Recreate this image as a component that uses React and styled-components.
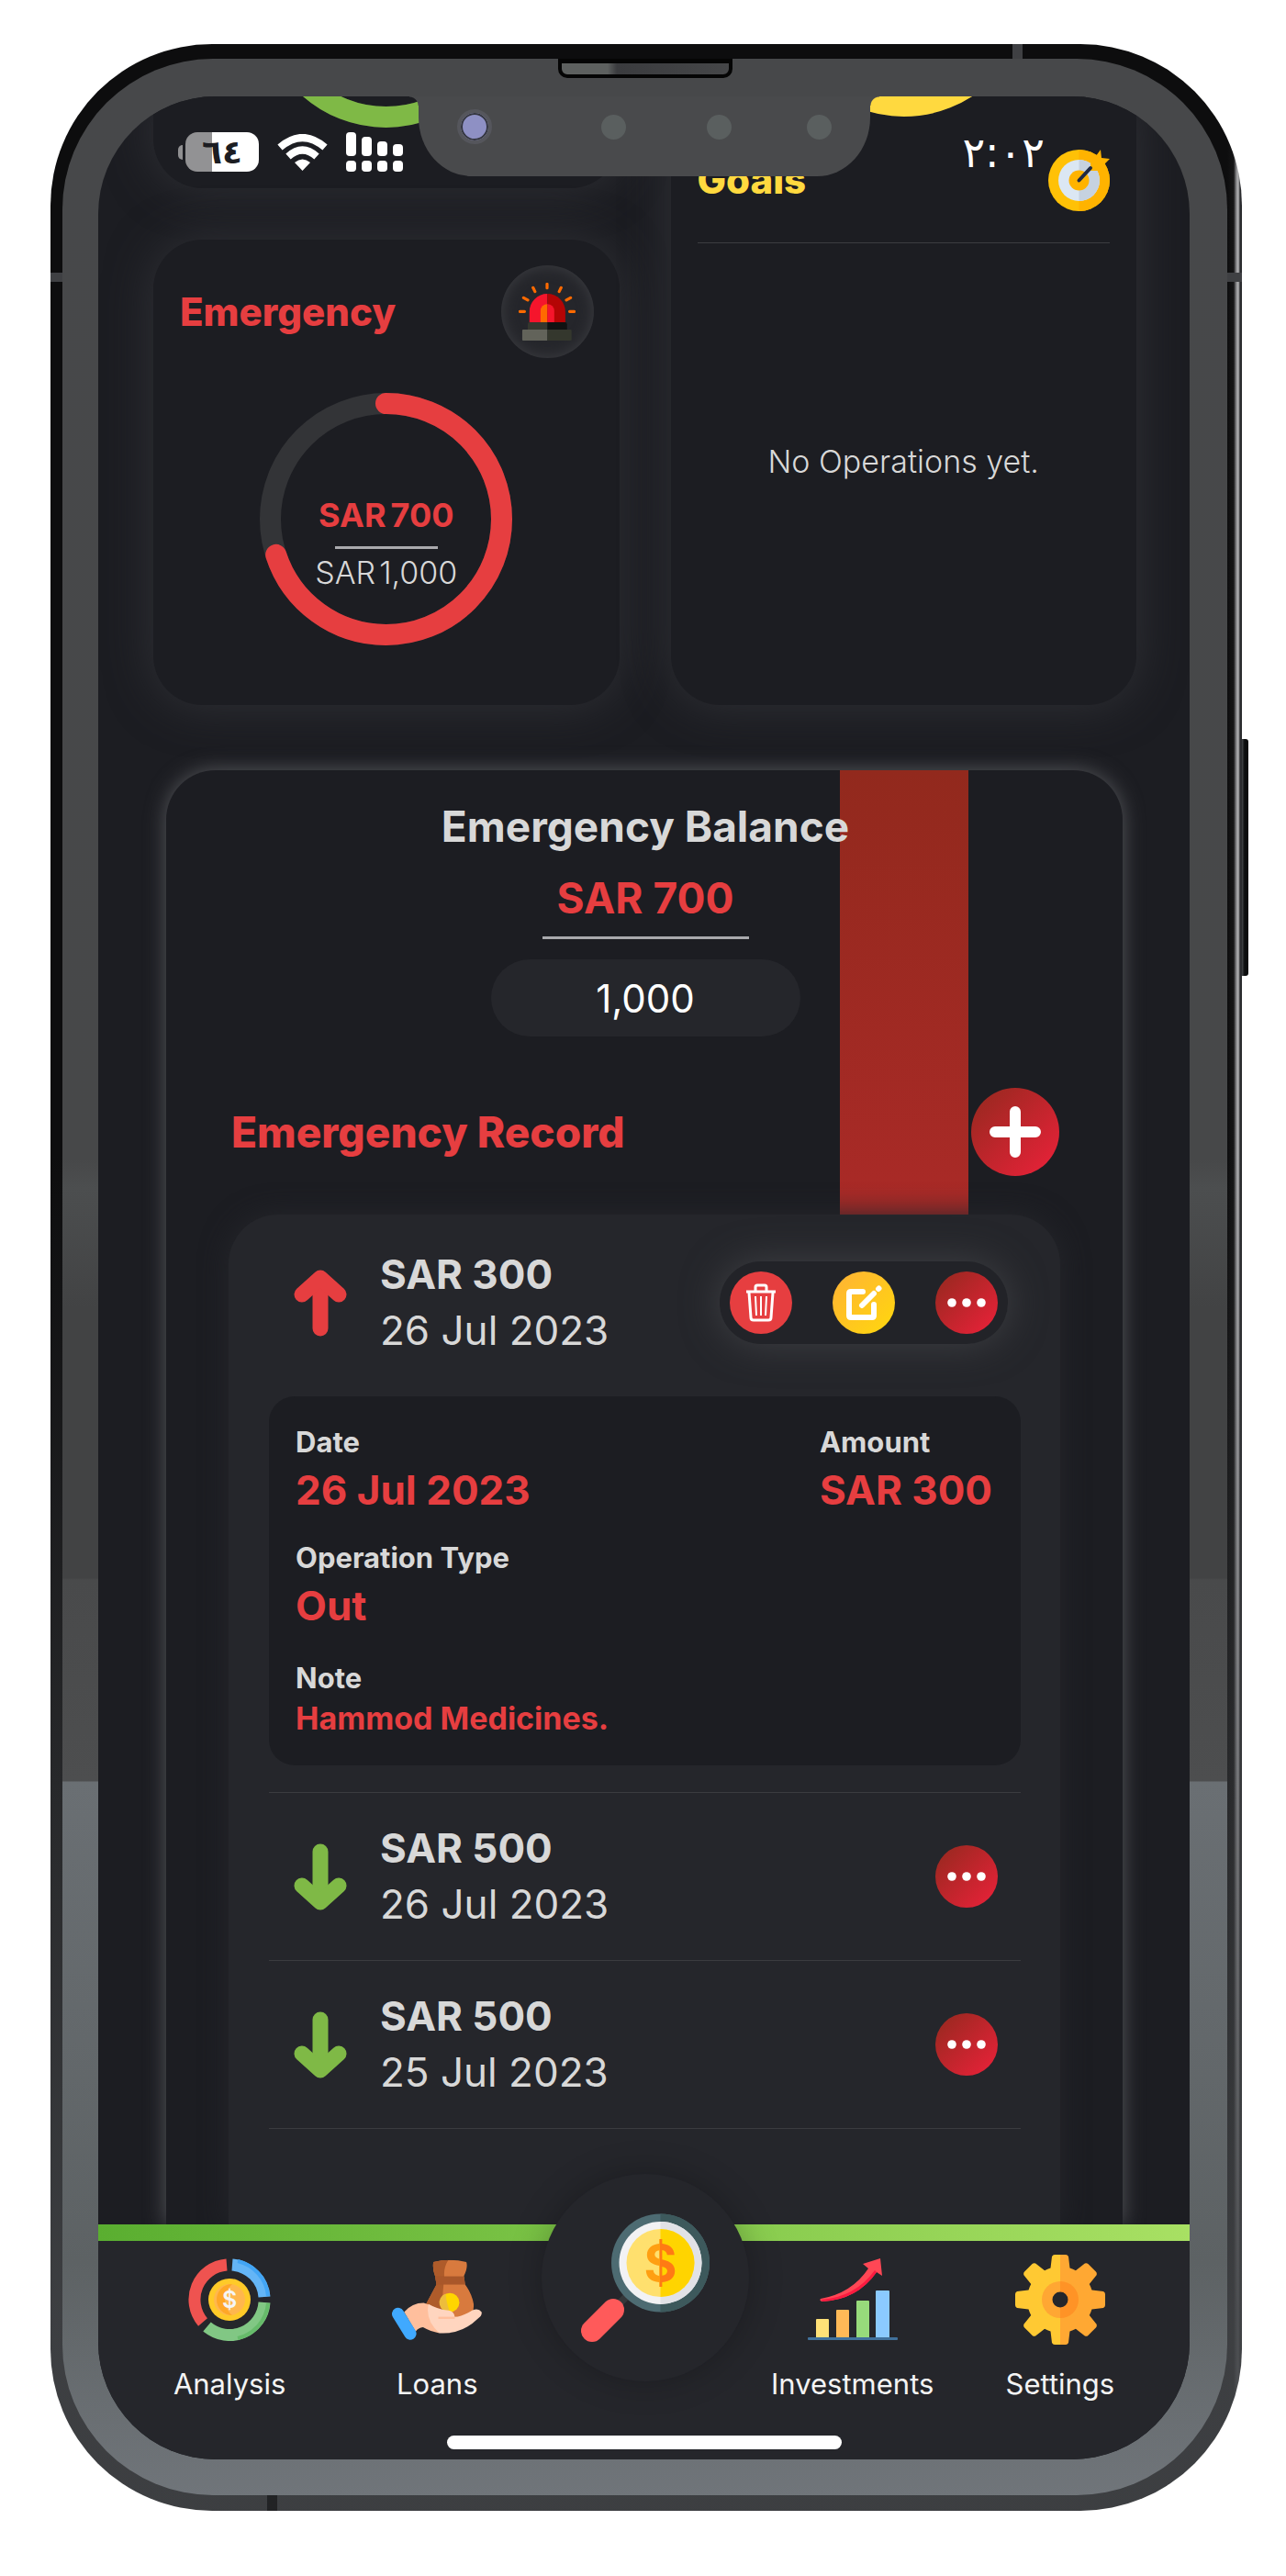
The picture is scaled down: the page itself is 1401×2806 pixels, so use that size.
import React from "react";
import styled, { createGlobalStyle, css } from "styled-components";

const color = {
  page: "#1c1d22",
  raised: "#25262b",
  text: "#d8d8d8",
  white: "#ffffff",
  red: "#e63e40",
  green: "#7fb946",
  yellow: "#ffd93f",
  line: "#3b3c40",
};

const GlobalStyle = createGlobalStyle`
  *, *::before, *::after { box-sizing: border-box; }
  body {
    margin: 0;
    background: #ffffff;
    color: ${color.text};
    font-family: Inter, "DejaVu Sans", sans-serif;
  }
  h2, h3, p, dl, dd, dt, ul { margin: 0; padding: 0; }
  ul { list-style: none; }
  svg { display: block; flex-shrink: 0; }
`;

/* ---------- Device ---------- */

const Page = styled.div`
  padding: 48px 48px 71px 55px;
`;

const Frame = styled.div`
  position: relative;
  padding: 16px 16px 17px 13px;
  border-radius: 176px;
  background:
    linear-gradient(to bottom, rgba(66, 68, 71, 0) 45%, rgba(66, 68, 71, 0.9) 92%),
    linear-gradient(to left, #2a2b2e 2px, #b4b4b6 4px, #8d8d90 6px, #161617 9px, #0d0d0e 16px, #0d0d0e 100%);
`;

const SideButton = styled.span`
  position: absolute;
  left: 100%;
  top: 757px;
  width: 7px;
  height: 258px;
  border-radius: 0 3px 3px 0;
  background: linear-gradient(to right, #45484b, #0c0d0e 40%);
`;

const Antenna = styled.span`
  position: absolute;
  background: #3f4043;
  ${(p) =>
    p.$side === "top"
      ? css`top: 0; right: 239px; width: 11px; height: 16px;`
      : p.$side === "left"
      ? css`top: 249px; left: 0; width: 13px; height: 10px;`
      : p.$side === "right"
      ? css`top: 249px; right: 0; width: 16px; height: 10px;`
      : css`bottom: 0; left: 236px; width: 11px; height: 17px; background: #222325;`}
`;

const Bezel = styled.div`
  position: relative;
  padding: 41px 41px 39px 39px;
  border-radius: 164px;
  background: linear-gradient(
    to bottom,
    #47484a 0,
    #474849 1199px,
    #4c4e4f 1230px,
    #424344 1360px,
    #424344 1655px,
    #494a4b 1657px,
    #4d4e4f 1876px,
    #6a6f73 1877px,
    #5d6264 2400px,
    #70757a 100%
  );
`;

const Speaker = styled.span`
  position: absolute;
  top: 0;
  left: 50%;
  width: 190px;
  height: 21px;
  margin-left: -95px;
  border: 4px solid #050505;
  border-top-width: 5px;
  border-radius: 0 0 10px 10px;
  background: linear-gradient(to right, #5d605f 0 50px, #3a3b3e 60px, #454648);
`;

const Screen = styled.div`
  position: relative;
  overflow: hidden;
  border-radius: 128px;
  background: ${color.page};
`;

const Notch = styled.div`
  position: absolute;
  z-index: 3;
  top: 0;
  left: 50%;
  width: 492px;
  height: 87px;
  margin-left: -246px;
  border-radius: 0 0 58px 58px / 0 0 64px 64px;
  background: #494a4c;

  &::before,
  &::after {
    content: "";
    position: absolute;
    top: 0;
    width: 10px;
    height: 10px;
  }
  &::before {
    right: 100%;
    background: radial-gradient(circle at 0 100%, transparent 9px, #494a4c 10px);
  }
  &::after {
    left: 100%;
    background: radial-gradient(circle at 100% 100%, transparent 9px, #494a4c 10px);
  }
`;

const NotchParts = styled.div`
  display: flex;
  align-items: center;
  height: 66px;
  padding-left: 42px;
`;

const Lens = styled.span`
  width: 38px;
  height: 38px;
  margin-right: 119px;
  border: 4px solid #55565c;
  border-radius: 50%;
  background: #8e90c4;
  box-shadow: inset 0 0 0 2px #34363f;
`;

const Sensor = styled.span`
  width: 27px;
  height: 27px;
  margin-right: ${(p) => p.$gap}px;
  border-radius: 50%;
  background: #5a5f5f;
`;

const StatusBar = styled.div`
  position: absolute;
  z-index: 2;
  top: 0;
  left: 0;
  right: 0;
  display: flex;
  align-items: center;
  height: 121px;
  padding: 0 158px 0 87px;
  color: ${color.white};
`;

const BatteryTip = styled.span`
  width: 5px;
  height: 16px;
  margin-right: 3px;
  border-radius: 5px 0 0 5px;
  background: #8f8f91;
`;

const Battery = styled.span`
  display: flex;
  align-items: center;
  justify-content: center;
  width: 80px;
  height: 43px;
  margin-right: 20px;
  border-radius: 13px;
  background: linear-gradient(to right, #929294 0 29px, #ffffff 29px);
  color: ${color.page};
  font: bold 36px/43px "DejaVu Sans", sans-serif;
`;

const Clock = styled.span`
  margin-left: auto;
  font: 46px/60px "DejaVu Sans", sans-serif;
  direction: ltr;
  unicode-bidi: bidi-override;
`;

const Signal = styled.svg`
  margin-left: 20px;
`;

/* ---------- Cards ---------- */

const Cards = styled.section`
  display: grid;
  grid-template-columns: 1fr 1fr;
  gap: 56px;
  padding: 0 58px 0 60px;
`;

const Stack = styled.div`
  display: flex;
  flex-direction: column;
  gap: 56px;
`;

const Card = styled.article`
  display: flex;
  flex-direction: column;
  border-radius: ${(p) => (p.$cut ? "0 0 54px 54px" : "54px")};
  background: ${color.page};
  box-shadow: 0 0 50px #303136;
`;

const CutRing = styled.div`
  display: flex;
  flex-direction: column;
  align-items: center;
  justify-content: flex-end;
  height: ${(p) => p.$visible}px;
  margin-bottom: ${(p) => p.$below}px;
`;

const CardHead = styled.header`
  display: flex;
  align-items: center;
  justify-content: space-between;
  padding: 28px 28px 38px 29px;
`;

const GoalsHead = styled.header`
  display: flex;
  align-items: center;
  justify-content: space-between;
  height: 138px;
  margin: 0 29px;
  border-bottom: 1px solid ${color.line};
`;

const CardTitle = styled.h2`
  color: ${(p) => p.$color};
  font-size: 42px;
  font-weight: 800;
  line-height: 50px;
`;

const IconDisc = styled.span`
  display: grid;
  place-items: center;
  width: 101px;
  height: 101px;
  border-radius: 50%;
  background: ${color.raised};
  box-shadow: inset 0 0 16px #3d3e42;
`;

const Gauge = styled.div`
  display: grid;
  justify-items: center;
  margin-bottom: 65px;

  > * {
    grid-area: 1 / 1;
  }
`;

const GaugeText = styled.div`
  display: flex;
  flex-direction: column;
  align-items: center;
  padding-top: 113px;
  font-size: 34px;
  line-height: 40px;
`;

const GaugeValue = styled.strong`
  display: flex;
  gap: 5px;
  color: ${color.red};
  font-size: 36px;
  font-weight: 700;
`;

const GaugeLimit = styled.span`
  display: flex;
  gap: 4px;
  font-weight: 300;
`;

const Rule = styled.span`
  width: ${(p) => p.$width}px;
  height: 3px;
  margin: ${(p) => p.$margin};
  background: #a9a9ad;
`;

const Empty = styled.p`
  display: grid;
  place-items: center;
  flex: 1;
  padding-bottom: 28px;
  font-size: 34px;
  font-weight: 300;
  line-height: 40px;
`;

/* ---------- Balance panel ---------- */

const Panel = styled.section`
  margin: 71px 73px 0 74px;
  border-radius: 54px 54px 0 0;
  background: ${color.page};
  box-shadow: 0 0 22px #56575b;
`;

const PanelHead = styled.div`
  position: relative;
  padding: 33px 69px 42px 71px;
`;

const Stripe = styled.span`
  position: absolute;
  top: 0;
  bottom: 0;
  right: 168px;
  width: 140px;
  background: linear-gradient(to bottom, #92291d, #aa2a27);
`;

const Balance = styled.div`
  position: relative;
  display: flex;
  flex-direction: column;
  align-items: center;
  margin-bottom: 56px;
`;

const BalanceTitle = styled.h2`
  margin-bottom: 22px;
  font-size: 46px;
  font-weight: 700;
  line-height: 56px;
`;

const BalanceValue = styled.strong`
  color: ${color.red};
  font-size: 46px;
  font-weight: 700;
  line-height: 56px;
`;

const LimitInput = styled.input`
  width: 337px;
  height: 84px;
  padding: 0;
  border: 0;
  border-radius: 42px;
  background: ${color.raised};
  color: ${color.white};
  font: 400 42px/50px Inter, sans-serif;
  text-align: center;
`;

const RecordHead = styled.div`
  position: relative;
  display: flex;
  align-items: center;
  justify-content: space-between;
`;

const RecordTitle = styled.h2`
  color: ${color.red};
  font-size: 46px;
  font-weight: 800;
  line-height: 56px;
`;

const fills = {
  crimson: "linear-gradient(135deg, #93291e, #ed213a)",
  red: color.red,
  yellow: "linear-gradient(135deg, #ffb236, #ffd80c)",
};

const RoundButton = styled.button`
  display: grid;
  place-items: center;
  width: ${(p) => p.$size}px;
  height: ${(p) => p.$size}px;
  padding: 0;
  border: 0;
  border-radius: 50%;
  background: ${(p) => fills[p.$fill]};
  cursor: pointer;
`;

const RecordList = styled.ul`
  position: relative;
  margin: 0 68px;
  padding: 5px 43px 104px 44px;
  border-radius: 54px 54px 0 0;
  background: ${color.raised};
  box-shadow: 0 0 30px ${color.raised};
`;

const Item = styled.li`
  border-bottom: 1px solid ${color.line};
`;

const ItemRow = styled.div`
  display: flex;
  align-items: center;
  height: 182px;
  padding: 0 14px 0 27px;
`;

const ItemText = styled.div`
  display: flex;
  flex: 1;
  flex-direction: column;
  padding-left: 36px;
  font-size: 44px;
  line-height: 61px;

  strong {
    font-weight: 700;
  }
`;

const Actions = styled.div`
  display: flex;
  gap: 44px;
  padding: 11px;
  border-radius: 45px;
  ${(p) =>
    p.$open &&
    css`
      background: #222328;
      box-shadow: 0 0 40px #3f4044;
    `}
`;

const Details = styled.dl`
  position: relative;
  display: grid;
  grid-template-columns: 1fr auto;
  row-gap: 22px;
  margin: 11px 0 29px;
  padding: 28px 31px 29px 29px;
  border-radius: 28px;
  background: ${color.page};
`;

const Field = styled.div`
  grid-column: ${(p) => (p.$wide ? "1 / -1" : "auto")};
  padding-top: ${(p) => (p.$note ? 5 : 0)}px;

  dt {
    font-size: 31px;
    font-weight: 700;
    line-height: 44px;
  }
  dd {
    color: ${color.red};
    font-size: ${(p) => (p.$note ? 34 : 44)}px;
    font-weight: 700;
    line-height: ${(p) => (p.$note ? 44 : 60)}px;
  }
`;

/* ---------- Bottom navigation ---------- */

const BottomBar = styled.footer`
  position: relative;
  z-index: 1;
  background: ${color.raised};

  &::before {
    content: "";
    display: block;
    height: 18px;
    background: linear-gradient(to right, #5aae30, #a8e063);
  }
`;

const Nav = styled.nav`
  display: grid;
  grid-template-columns: repeat(5, 1fr);
  padding: 14px 28px 36px 30px;
`;

const NavLink = styled.a`
  display: flex;
  flex-direction: column;
  align-items: center;
  gap: 22px;
  color: #f4f4f4;
  font-size: 31px;
  line-height: 40px;
  text-decoration: none;
`;

const NavIcon = styled.span`
  display: grid;
  place-items: center;
  height: 100px;
`;

const Hub = styled.a`
  position: absolute;
  top: -55px;
  left: 50%;
  display: grid;
  place-items: center;
  width: 226px;
  height: 226px;
  margin-left: -112px;
  border-radius: 50%;
  background: ${color.raised};
  box-shadow: 0 0 36px rgba(0, 0, 0, 0.25);
`;

const HomeIndicator = styled.span`
  display: block;
  width: 430px;
  height: 15px;
  margin: 0 auto;
  border-radius: 8px;
  background: ${color.white};
`;

const BarFoot = styled.div`
  padding-bottom: 11px;
`;

/* ---------- Drawings ---------- */

const Ring = ({ stroke, value = 100 }) => (
  <svg width="275" height="275" viewBox="0 0 275 275" fill="none" strokeWidth="23">
    <circle cx="137.5" cy="137.5" r="126" stroke="#333437" />
    <circle
      cx="137.5"
      cy="137.5"
      r="126"
      stroke={stroke}
      strokeLinecap="round"
      pathLength="100"
      strokeDasharray={`${value} 100`}
      transform="rotate(-90 137.5 137.5)"
    />
  </svg>
);

const Wifi = () => (
  <svg width="55" height="40" viewBox="0 0 55 40" fill="none" stroke="#fff" strokeWidth="8">
    <path d="M3 14.500Q27.500 -6.500 52 14.500" />
    <path d="M12 24.500Q27.500 10.500 43 24.500" />
    <path d="M27.500 40L19 31Q27.500 24 36 31Z" fill="#fff" stroke="none" />
  </svg>
);

const SignalBars = () => (
  <Signal width="62" height="43" viewBox="0 0 62 43" fill="#fff">
    {[0, 5, 10, 13].map((top, i) => (
      <React.Fragment key={i}>
        <rect x={i * 17} y={top} width="11" height={26 - top} rx="4" />
        <rect x={i * 17} y="31" width="11" height="12" rx="4" />
      </React.Fragment>
    ))}
  </Signal>
);

const Siren = () => (
  <svg width="62" height="63" viewBox="0 0 174 177">
    <path d="M33 121V89A54 55 0 0 1 88 34V121Z" fill="#f5152c" />
    <path d="M88 34A55 55 0 0 1 143 89V121H88Z" fill="#b40505" />
    <path d="M67 121V86A21 21 0 0 1 88 65V121Z" fill="#ff6a00" />
    <path d="M88 65A21 21 0 0 1 109 86V121H88Z" fill="#f5152c" />
    <path d="M28 143V127Q28 121 34 121H88V143Z" fill="#35372f" />
    <path d="M88 121H142Q148 121 148 127V143H88Z" fill="#111212" />
    <path d="M11 146Q11 143 14 143H88V177H14Q11 177 11 174Z" fill="#62635a" />
    <path d="M88 143H159Q162 143 162 146V174Q162 177 159 177H88Z" fill="#34372d" />
    <path
      d="M87 4V16M44 15L50 27M130 15L124 27M15 46L28 53M159 46L146 53M4 88H18M156 88H170"
      stroke="#ff6a00"
      strokeWidth="9"
      strokeLinecap="round"
    />
  </svg>
);

const Target = () => (
  <svg width="67" height="68" viewBox="0 0 67 68">
    <circle cx="33.500" cy="34.500" r="33.500" fill="#ffc107" />
    <path d="M33.500 1A33.500 33.500 0 0 1 33.500 68Z" fill="#ffb300" />
    <circle cx="33.500" cy="34.500" r="22.500" fill="#dbe7f3" />
    <path d="M33.500 12A22.500 22.500 0 0 1 33.500 57Z" fill="#c6d2e0" />
    <circle cx="33.500" cy="34.500" r="11" fill="#ffb300" />
    <path d="M46 16L57 1L58 10L67 11L54 24L46 24Z" fill="#ffb300" />
    <path d="M33.500 34.500L46 21" stroke="#1f2a44" strokeWidth="4" strokeLinecap="round" />
  </svg>
);

const Plus = () => (
  <svg width="56" height="56" viewBox="0 0 56 56" stroke="#fff" strokeWidth="12" strokeLinecap="round">
    <path d="M28 6V50M6 28H50" />
  </svg>
);

const Arrow = ({ out }) => (
  <svg width="58" height="73" viewBox="0 0 58 73" fill="none">
    <g
      transform={out ? undefined : "rotate(180 29 36.5)"}
      stroke={out ? color.red : color.green}
      strokeWidth="17"
      strokeLinecap="round"
      strokeLinejoin="round"
    >
      <path d="M29 64V14" />
      <path d="M9 27L29 9L49 27" />
    </g>
  </svg>
);

const Trash = () => (
  <svg width="34" height="42" viewBox="0 0 34 42" fill="none" stroke="#fff" strokeWidth="3">
    <path d="M1 9H33M11 8V4Q11 2 13 2H21Q23 2 23 4V8" />
    <path d="M4 10L6 37Q6 40 9 40H25Q28 40 28 37L30 10" />
    <path d="M11 14L12 35M17 14V35M23 14L22 35" strokeWidth="2" />
  </svg>
);

const Edit = () => (
  <svg width="40" height="40" viewBox="0 0 40 40" fill="none" stroke="#fff" strokeWidth="6">
    <path d="M19 8H6Q4 8 4 10V34Q4 36 6 36H29Q31 36 31 34V22" strokeLinecap="round" />
    <path d="M18 23L31 10M36 5L36.500 4.500" strokeLinecap="round" />
  </svg>
);

const Dots = () => (
  <svg width="42" height="10" viewBox="0 0 42 10" fill="#fff">
    <circle cx="5" cy="5" r="4.800" />
    <circle cx="21" cy="5" r="4.800" />
    <circle cx="37" cy="5" r="4.800" />
  </svg>
);

const AnalysisIcon = () => (
  <svg width="90" height="90" viewBox="-45 -45 90 90" fill="none" strokeWidth="13">
    <path d="M-3 -38A38 38 0 0 0 -29 24.500" stroke="#ef5350" />
    <path d="M3 -38A38 38 0 0 1 38 -3" stroke="#64b5f6" />
    <path d="M9 -42A43 43 0 0 1 42 -4" stroke="#42a5f5" strokeWidth="4" />
    <path d="M38 3A38 38 0 0 1 -24.500 29.500" stroke="#81c784" />
    <path d="M42 4A43 43 0 0 1 9 42" stroke="#66bb6a" strokeWidth="4" />
    <circle r="23" fill="#ffca28" />
    <circle r="17" fill="#ffb74d" />
    <path d="M3 -17A17 17 0 0 0 3 17A22 22 0 0 1 3 -17Z" fill="#ffa726" />
    <text y="9" textAnchor="middle" fill="#f5f5f5" fontSize="25" fontWeight="600" fontFamily="Inter, sans-serif">
      $
    </text>
  </svg>
);

const LoansIcon = () => (
  <svg width="98" height="88" viewBox="0 0 295 263">
    <defs>
      <clipPath id="bag">
        <path d="M136 8Q190 -6 244 8Q250 26 236 54L240 82Q262 112 268 146Q270 176 250 190H160L112 146Q130 112 146 82L142 56Q132 30 136 8Z" />
      </clipPath>
    </defs>
    <g clipPath="url(#bag)">
      <rect width="295" height="200" fill="#d87a3e" />
      <path d="M100 0H186Q168 26 172 60Q164 110 166 200H90Z" fill="#ae5b2a" />
      <rect x="140" y="55" width="100" height="27" fill="#a9572a" />
    </g>
    <circle cx="190" cy="141" r="31" fill="#ffd600" />
    <path d="M176 112A31 31 0 0 0 190 172Q178 140 176 112Z" fill="#edbd3c" />
    <path d="M40 172Q66 142 104 142L122 148L156 241Q126 236 102 222Q86 224 78 236Z" fill="#ffbf9d" />
    <path
      d="M120 146Q150 164 186 167Q204 170 206 188Q232 186 264 166Q284 158 294 172Q296 184 284 192Q230 246 156 241Q108 200 120 146Z"
      fill="#ffd5bf"
    />
    <path d="M152 191H206" stroke="#ffbf9d" strokeWidth="7" />
    <path d="M20 178L60 243" stroke="#40a9ff" strokeWidth="40" strokeLinecap="round" />
  </svg>
);

const InvestmentsIcon = () => (
  <svg width="98" height="90" viewBox="0 0 98 90">
    <rect x="9" y="66" width="14" height="22" rx="1" fill="#ffe177" />
    <rect x="31" y="56" width="14" height="32" rx="1" fill="#ffb957" />
    <rect x="53" y="46" width="14" height="42" rx="1" fill="#97da7b" />
    <rect x="74" y="35" width="15" height="53" rx="1" fill="#8bcaff" />
    <rect y="86" width="98" height="3" rx="1" fill="#41719c" />
    <path d="M14 44Q48 38 66 11L60 6L79 0L81 19L75 15Q54 45 16 47Q12 46 14 44Z" fill="#ff4755" />
    <path d="M16 47Q54 45 75 15L73 13Q52 42 15 45Z" fill="#fc1a40" />
  </svg>
);

const SettingsIcon = () => (
  <svg width="98" height="98" viewBox="-49 -49 98 98">
    <defs>
      <clipPath id="gear">
        <circle r="36" />
        {[0, 45, 90, 135, 180, 225, 270, 315].map((angle) => (
          <path key={angle} d="M-11 -30L-9 -47Q-8 -49 -6 -49H6Q8 -49 9 -47L11 -30Z" transform={`rotate(${angle})`} />
        ))}
      </clipPath>
    </defs>
    <g clipPath="url(#gear)">
      <rect x="-49" y="-49" width="49" height="98" fill="#ffc933" />
      <rect y="-49" width="49" height="98" fill="#ffa833" />
    </g>
    <circle r="20" fill="#ffa733" />
    <path d="M0 -20A20 20 0 0 1 0 20Z" fill="#ff9326" />
    <circle r="8.500" fill={color.raised} />
  </svg>
);

const MagnifierIcon = () => (
  <svg width="140" height="141" viewBox="0 0 140 141">
    <defs>
      <linearGradient id="dollar" gradientUnits="userSpaceOnUse" x1="86" x2="87" y1="0" y2="0">
        <stop offset="0.500" stopColor="#ff9f12" />
        <stop offset="0.500" stopColor="#ff7a14" />
      </linearGradient>
    </defs>
    <path d="M41 99L52 88" stroke="#34373a" strokeWidth="8" />
    <circle cx="86.500" cy="54" r="53.500" fill="#4d6b72" />
    <path d="M86.500 .500A53.500 53.500 0 0 1 86.500 107.500Z" fill="#3d595c" />
    <circle cx="86.500" cy="54" r="45" fill="#f2f2f4" />
    <path d="M86.500 9A45 45 0 0 1 86.500 99Z" fill="#e1e2e6" />
    <circle cx="86.500" cy="54" r="37" fill="#ffe06e" />
    <path d="M86.500 17A37 37 0 0 1 86.500 91Z" fill="#ffd400" />
    <text
      x="86.500"
      y="74"
      textAnchor="middle"
      fill="url(#dollar)"
      fontSize="55"
      fontWeight="700"
      fontFamily="Inter, sans-serif"
    >
      $
    </text>
    <path d="M12 128L35 105" stroke="#ff5a5a" strokeWidth="24" strokeLinecap="round" />
  </svg>
);

/* ---------- App ---------- */

const records = [
  { amount: "SAR 300", date: "26 Jul 2023", type: "Out", note: "Hammod Medicines.", open: true },
  { amount: "SAR 500", date: "26 Jul 2023", type: "In" },
  { amount: "SAR 500", date: "25 Jul 2023", type: "In" },
];

const Record = ({ record }) => (
  <Item>
    <ItemRow>
      <Arrow out={record.type === "Out"} />
      <ItemText>
        <strong>{record.amount}</strong>
        <span>{record.date}</span>
      </ItemText>
      <Actions $open={record.open}>
        {record.open && (
          <>
            <RoundButton $size={68} $fill="red" aria-label="Delete">
              <Trash />
            </RoundButton>
            <RoundButton $size={68} $fill="yellow" aria-label="Edit">
              <Edit />
            </RoundButton>
          </>
        )}
        <RoundButton $size={68} $fill="crimson" aria-label="More">
          <Dots />
        </RoundButton>
      </Actions>
    </ItemRow>
    {record.open && (
      <Details>
        <Field>
          <dt>Date</dt>
          <dd>{record.date}</dd>
        </Field>
        <Field>
          <dt>Amount</dt>
          <dd>{record.amount}</dd>
        </Field>
        <Field $wide>
          <dt>Operation Type</dt>
          <dd>{record.type}</dd>
        </Field>
        <Field $wide $note>
          <dt>Note</dt>
          <dd>{record.note}</dd>
        </Field>
      </Details>
    )}
  </Item>
);

const NavItem = ({ label, children }) => (
  <NavLink href="#">
    <NavIcon>{children}</NavIcon>
    {label}
  </NavLink>
);

export default function App() {
  return (
    <Page>
      <GlobalStyle />
      <Frame>
        <SideButton />
        <Antenna $side="top" />
        <Antenna $side="left" />
        <Antenna $side="right" />
        <Antenna $side="bottom" />
        <Bezel>
          <Speaker />
          <Screen>
            <StatusBar>
              <BatteryTip />
              <Battery>٦٤</Battery>
              <Wifi />
              <SignalBars />
              <Clock>٢:٠٢</Clock>
            </StatusBar>
            <Notch>
              <NotchParts>
                <Lens />
                <Sensor $gap={88} />
                <Sensor $gap={82} />
                <Sensor $gap={0} />
              </NotchParts>
            </Notch>

            <Cards>
              <Stack>
                <Card $cut>
                  <CutRing $visible={34} $below={66}>
                    <Ring stroke={color.green} />
                  </CutRing>
                </Card>
                <Card>
                  <CardHead>
                    <CardTitle $color={color.red}>Emergency</CardTitle>
                    <IconDisc>
                      <Siren />
                    </IconDisc>
                  </CardHead>
                  <Gauge>
                    <Ring stroke={color.red} value={70} />
                    <GaugeText>
                      <GaugeValue>
                        <span>SAR</span>
                        <span>700</span>
                      </GaugeValue>
                      <Rule $width={112} $margin="14px 0 6px" />
                      <GaugeLimit>
                        <span>SAR</span>
                        <span>1,000</span>
                      </GaugeLimit>
                    </GaugeText>
                  </Gauge>
                </Card>
              </Stack>
              <Card $cut>
                <CutRing $visible={22} $below={0}>
                  <Ring stroke={color.yellow} />
                </CutRing>
                <GoalsHead>
                  <CardTitle $color={color.yellow}>Goals</CardTitle>
                  <Target />
                </GoalsHead>
                <Empty>No Operations yet.</Empty>
              </Card>
            </Cards>

            <Panel>
              <PanelHead>
                <Stripe />
                <Balance>
                  <BalanceTitle>Emergency Balance</BalanceTitle>
                  <BalanceValue>SAR 700</BalanceValue>
                  <Rule $width={225} $margin="14px 0 22px" />
                  <LimitInput aria-label="Limit" defaultValue="1,000" />
                </Balance>
                <RecordHead>
                  <RecordTitle>Emergency Record</RecordTitle>
                  <RoundButton $size={96} $fill="crimson" aria-label="Add">
                    <Plus />
                  </RoundButton>
                </RecordHead>
              </PanelHead>
              <RecordList>
                {records.map((record, i) => (
                  <Record key={i} record={record} />
                ))}
              </RecordList>
            </Panel>

            <BottomBar>
              <Nav>
                <NavItem label="Analysis">
                  <AnalysisIcon />
                </NavItem>
                <NavItem label="Loans">
                  <LoansIcon />
                </NavItem>
                <span />
                <NavItem label="Investments">
                  <InvestmentsIcon />
                </NavItem>
                <NavItem label="Settings">
                  <SettingsIcon />
                </NavItem>
              </Nav>
              <Hub href="#" aria-label="Search">
                <MagnifierIcon />
              </Hub>
              <BarFoot>
                <HomeIndicator />
              </BarFoot>
            </BottomBar>
          </Screen>
        </Bezel>
      </Frame>
    </Page>
  );
}
